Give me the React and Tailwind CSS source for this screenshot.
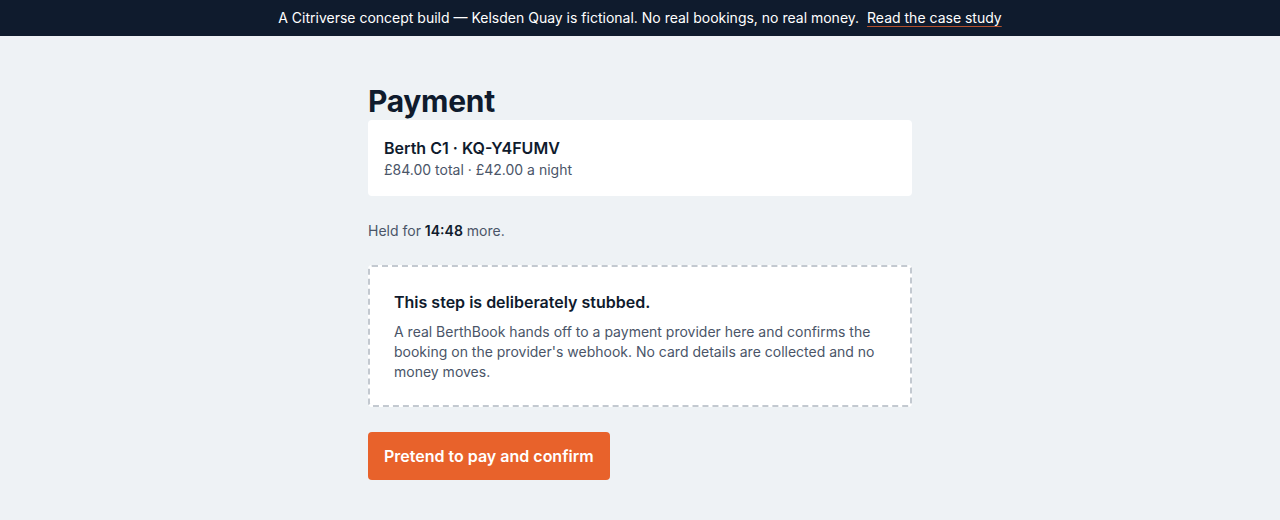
export default function App() {
  return (
    <div className="min-h-[520px] bg-[#eef2f5] font-['Inter','Noto_Sans',sans-serif] text-[#0f1b2d]">
      {/* Concept-build banner */}
      <div className="h-9 bg-[#0f1b2d] flex items-center justify-center text-sm text-white">
        <span>A Citriverse concept build — Kelsden Quay is fictional. No real bookings, no real money.</span>
        <a href="#" className="ml-2 underline decoration-[#b4502e] underline-offset-[3px]">Read the case study</a>
      </div>

      <main className="w-[544px] mx-auto pt-[47px]">
        <h1 className="text-[30px] leading-[36px] font-bold tracking-[-0.01em]">Payment</h1>

        {/* Booking summary */}
        <div className="mt-px bg-white rounded p-4">
          <div className="text-base leading-6 font-semibold">Berth C1 · KQ-Y4FUMV</div>
          <div className="text-sm leading-5 text-[#4a5568]">£84.00 total · £42.00 a night</div>
        </div>

        <p className="mt-[25px] text-sm leading-5 text-[#4a5568]">
          Held for <strong className="font-semibold text-[#0f1b2d]">14:48</strong> more.
        </p>

        {/* Stub notice */}
        <div className="mt-6 bg-white rounded border-2 border-dashed border-[#c3c9d0] px-6 py-[23px]">
          <div className="text-base leading-6 font-semibold">This step is deliberately stubbed.</div>
          <p className="mt-2 text-sm leading-5 text-[#4a5568]">
            A real BerthBook hands off to a payment provider here and confirms the booking on the provider's webhook. No card details are collected and no money moves.
          </p>
        </div>

        <button className="mt-[25px] h-12 px-4 rounded bg-[#e8622b] text-white text-base font-semibold">
          Pretend to pay and confirm
        </button>
      </main>
    </div>
  );
}
